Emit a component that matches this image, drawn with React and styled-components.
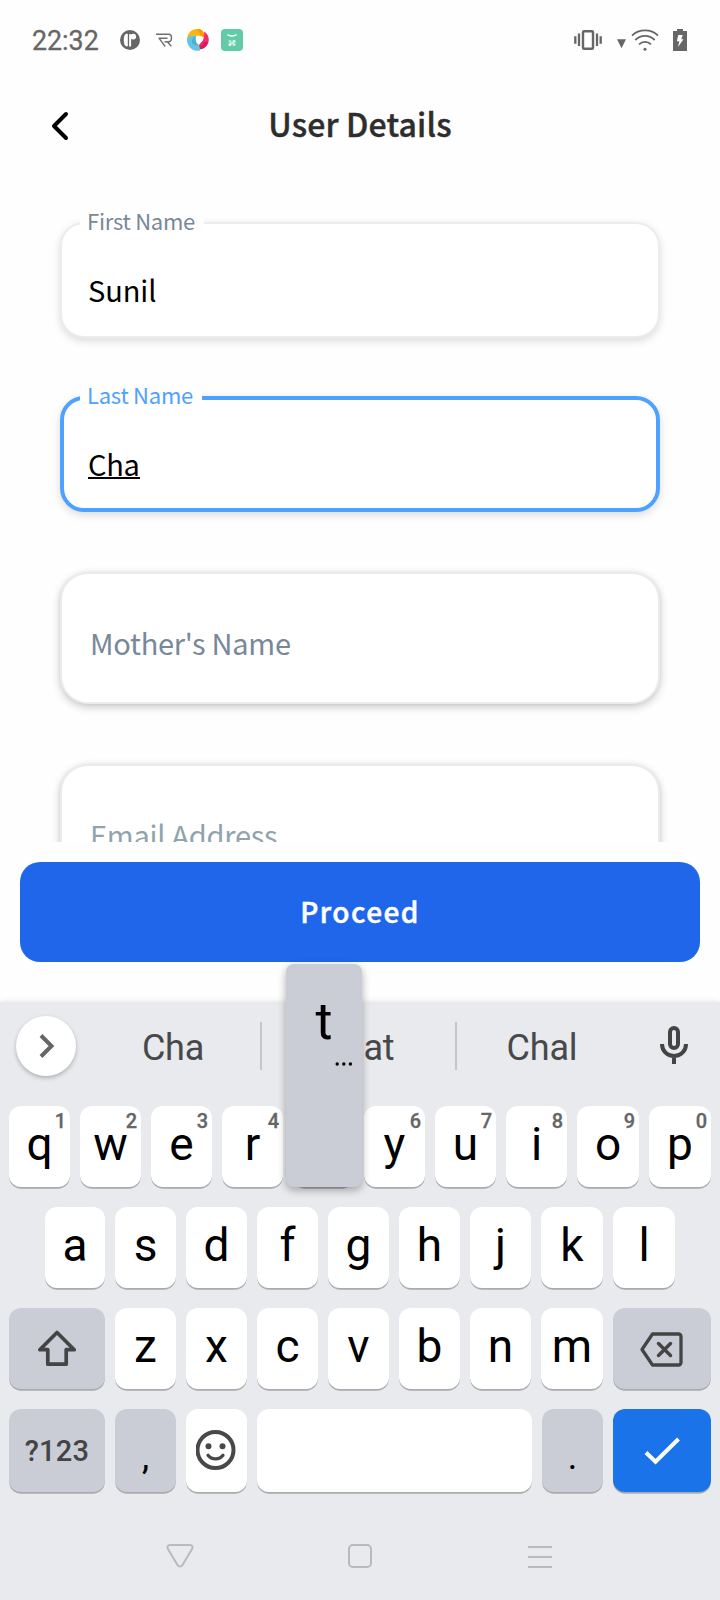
import React from "react";
import styled, { createGlobalStyle, css } from "styled-components";

const GlobalStyle = createGlobalStyle`
  * { box-sizing: border-box; }
  body { margin: 0; background: #fefefe; }
  svg { display: block; flex: none; }
`;

const sourceSans = `"Noto Sans CJK SC", "Open Sans", sans-serif`;
const roboto = `Roboto, sans-serif`;

const Screen = styled.div`
  width: 720px;
  height: 1600px;
  overflow: hidden;
  display: flex;
  flex-direction: column;
  background: #fefefe;
  font-family: ${roboto};
`;

const StatusBar = styled.header`
  height: 80px;
  flex: none;
  display: flex;
  align-items: center;
  justify-content: space-between;
  padding: 0 33px 0 32px;
  color: #666;
`;

const StatusGroup = styled.div`
  display: flex;
  align-items: center;
`;

const Clock = styled.span`
  width: 88px;
  font-size: 26.8px;
  line-height: 30px;
  padding-top: 2px;
  -webkit-text-stroke: 0.3px #666;
`;

const Spacer = styled.span`
  flex: none;
  width: ${(p) => p.$w}px;
`;

const TitleBar = styled.div`
  height: 92px;
  flex: none;
  display: grid;
  grid-template-columns: 52px 1fr 52px;
  align-items: center;
  padding: 0 51px;
  margin-bottom: 2px;
`;

const Title = styled.h1`
  margin: 0;
  padding-bottom: 6px;
  text-align: center;
  font: 500 32px/48px ${sourceSans};
  color: #2d2d2d;
  letter-spacing: 0.15px;
  -webkit-text-stroke: 0.4px #2d2d2d;
`;

const Form = styled.main`
  height: 668px;
  flex: none;
  overflow: hidden;
  padding: 48px 60px 0;
  display: flex;
  flex-direction: column;
`;

const Field = styled.div`
  position: relative;
  flex: none;
  height: ${(p) => (p.$empty ? 132 : 116)}px;
  margin-bottom: ${(p) => p.$gap}px;
  border: ${(p) => (p.$focused ? "4px solid #4da1ff" : "2px solid #e9eded")};
  border-radius: ${(p) => (p.$empty ? 28 : 24)}px;
  background: #fff;
  box-shadow: ${(p) =>
    p.$empty
      ? "0 3px 8px rgba(0,0,0,0.22), 0 0 3px rgba(0,0,0,0.06)"
      : "0 3px 8px rgba(0,0,0,0.14)"};
  padding: ${(p) => (p.$focused ? "41px 0 0 24px" : p.$empty ? "46px 0 0 28px" : "43px 0 0 26px")};
`;

const FieldLabel = styled.label`
  position: absolute;
  top: ${(p) => (p.$focused ? -19 : -17)}px;
  left: ${(p) => (p.$focused ? 16 : 18)}px;
  padding: 0 9px 0 7px;
  background: #fefefe;
  font: 400 22px/26px ${sourceSans};
  letter-spacing: -0.25px;
  color: ${(p) => (p.$focused ? "#4da1ff" : "#778899")};
`;

const FieldValue = styled.span`
  display: inline-block;
  font: 400 29px/44px ${sourceSans};
  letter-spacing: -0.1px;
  color: #000;
  ${(p) =>
    p.$composing &&
    css`
      letter-spacing: -0.3px;
      line-height: 30px;
      margin-top: 7px;
      height: 31px;
      border-bottom: 2px solid #000;
    `}
`;

const Placeholder = styled.span`
  display: block;
  font: 400 29px/44px ${sourceSans};
  letter-spacing: -0.26px;
  color: ${(p) => p.$tone};
`;

const Footer = styled.div`
  flex: none;
  height: 160px;
  padding: 20px 20px 40px;
`;

const ProceedButton = styled.button`
  display: block;
  width: 100%;
  height: 100px;
  padding: 0;
  border: 0;
  border-radius: 20px;
  background: #1f66eb;
  color: #fff;
  font: 500 28px/98px ${sourceSans};
  padding-bottom: 2px;
  letter-spacing: 1.45px;
  -webkit-text-stroke: 0.5px #fff;
`;

const Keyboard = styled.section`
  flex: 1;
  background: #e8eaed;
  box-shadow: 0 0 6px rgba(0, 0, 0, 0.12);
  display: flex;
  flex-direction: column;
`;

const Suggestions = styled.div`
  height: 104px;
  flex: none;
  padding: 14px 16px 0;
  display: flex;
  align-items: flex-start;
`;

const ExpandButton = styled.button`
  width: 60px;
  height: 60px;
  padding: 0;
  border: 0;
  border-radius: 50%;
  background: #fff;
  box-shadow: 0 2px 4px rgba(0, 0, 0, 0.25);
  display: grid;
  place-items: center;
`;

const Suggestion = styled.span`
  width: ${(p) => p.$w}px;
  text-align: center;
  font: 400 36px/48px ${roboto};
  letter-spacing: -0.2px;
  padding: 8px ${(p) => p.$trim || 0}px 0 0;
  color: #47484a;
`;

const Divider = styled.span`
  width: 2px;
  height: 48px;
  margin-top: 6px;
  background: #c4c6c9;
`;

const KeyRow = styled.div`
  flex: none;
  display: flex;
  gap: 10px;
  padding-left: ${(p) => p.$indent || 9}px;
  margin-bottom: 20px;
`;

const Key = styled.div`
  position: relative;
  flex: none;
  width: ${(p) => p.$w || 61}px;
  height: ${(p) => (p.$tall ? 83 : 81)}px;
  border-radius: 12px;
  background: ${(p) => (p.$kind === "enter" ? "#1a73e8" : p.$kind === "grey" ? "#cacdd6" : "#fff")};
  box-shadow: 0 2px 0 -0.2px #a9abae;
  color: #000;
  font: 400 46px/77px ${roboto};
  text-align: center;
`;

const KeyHint = styled.span`
  position: absolute;
  top: 3px;
  right: 4px;
  font: 500 20px/24px ${roboto};
  color: #666;
  -webkit-text-stroke: 0.3px #666;
`;

const IconKey = styled(Key)`
  display: grid;
  place-items: center;
`;

const SymbolKey = styled(Key)`
  font: 500 29px/84px ${roboto};
  letter-spacing: 0.2px;
  color: #444;
`;

const PunctuationKey = styled(Key)`
  font-size: 36px;
  line-height: 96px;
`;

const KeyPopup = styled.div`
  position: absolute;
  z-index: 2;
  left: -7px;
  bottom: 0;
  width: 76px;
  height: 223px;
  border-radius: 8px;
  background: #cacdd6;
  box-shadow: 0 3px 8px rgba(0, 0, 0, 0.32);
  font: 400 52px/60px ${roboto};
  padding-top: 28px;
`;

const MoreDots = styled.svg`
  margin: 10px 0 0 49px;
`;

const NavBar = styled.nav`
  flex: 1;
  display: grid;
  grid-template-columns: repeat(3, 180px);
  justify-content: center;
  justify-items: center;
  align-items: start;
  padding-top: 28px;
`;

const topRow = [
  ["q", "1"], ["w", "2"], ["e", "3"], ["r", "4"], ["t", "5"],
  ["y", "6"], ["u", "7"], ["i", "8"], ["o", "9", 62], ["p", "0", 62],
];

function NotificationIcons() {
  return (
    <>
      <svg width="20" height="20" viewBox="0 0 20 20">
        <circle cx="10" cy="10" r="10" fill="#666" />
        <path d="M7.800 3.800C4.800 3 3.800 6 3.800 10s1 7 4 6.200Z" fill="#fff" />
        <path d="M9.100 4.200h2v12.300h-2Z" fill="#fff" />
        <circle cx="13.200" cy="6.600" r="2.900" fill="#fff" />
      </svg>
      <Spacer $w={16} />
      <svg width="17" height="15" viewBox="0 0 17 15" fill="none" stroke="#707070" strokeWidth="1.400">
        <path d="M0 1.200h12.500c4 0 4 7.500 0 7.500H8.500M2.500 5.200h9M3 5.200l6.200 8.300M11.300 8.700l4 4.500" />
      </svg>
      <Spacer $w={14} />
      <svg width="22" height="22" viewBox="0 0 22 22">
        <path d="M0 9.500C1 2 7-1 13 .3c3 .9 4 3.500 4.200 8.200L14 7H8.500C5.500 6.500 2.500 7 0 9.500Z" fill="#ffb511" />
        <path d="M9 0c5-.8 9 2.500 8.200 8.500L13.500 6.500C13 4 11.500 2 9 0Z" fill="#ff9800" />
        <path d="M17 2.500C22 5.500 23.500 12 19.500 17c-2.500 3-6.500 4-10.500 2.500L16 11c1-2.500 1.500-5.500 1-8.500Z" fill="#ef2f6b" />
        <path d="M9 19.500c3-.5 5.500-2.500 8-6.500 1.500 0 3 0 4 0-1.500 6-6.500 8.500-12 6.500Z" fill="#d81b60" />
        <path d="M0 9.500C2 6.500 5.500 6 9 7c-.8 4 0 6.500 2.500 8.500 1 2 1.500 3.500 1.500 6C5.500 23.500-.5 17 0 9.500Z" fill="#62c6e2" />
        <path d="M9 7c-.8 4 0 6.500 2.500 8.500C9 17 6.500 16 5 13.500 4.500 10.500 6 8 9 7Z" fill="#4bb0cf" />
        <path d="M9 7.200c2-.7 4-.4 5 .8l2 3-4.500 4.500C9 14 8.200 11 9 7.200Z" fill="#fff" />
      </svg>
      <Spacer $w={12} />
      <svg width="22" height="22" viewBox="0 0 22 22">
        <rect width="22" height="22" rx="4" fill="#62cba8" />
        <path d="M6.500 5.500c2 2 7 2 9 0" fill="none" stroke="#fff" strokeWidth="1.300" />
        <g fill="#eafaf4">
          <circle cx="9" cy="12.300" r="1.500" opacity=".6" /><circle cx="13" cy="12.300" r="1.500" />
          <circle cx="9" cy="15.500" r="1.500" /><circle cx="13" cy="15.500" r="1.500" opacity=".8" />
          <circle cx="11" cy="14" r="1" />
        </g>
      </svg>
    </>
  );
}

function SystemIcons() {
  return (
    <>
      <svg width="28" height="20" viewBox="0 0 28 20">
        <rect x="9" y="1.200" width="10" height="17.600" rx="1" fill="none" stroke="#666" strokeWidth="2.400" />
        <path d="M1.300 6.300v7.500M5 3.500v12.500M23 3.500v12.500M26.700 6.300v7.500" stroke="#666" strokeWidth="2.300" />
      </svg>
      <Spacer $w={15} />
      <svg width="9" height="22" viewBox="0 0 9 22">
        <path d="M0 10.300h9L4.500 19.300Z" fill="#666" />
      </svg>
      <Spacer $w={5} />
      <svg width="28" height="22" viewBox="0 0 28 22" fill="none" stroke="#666" strokeWidth="1.800">
        <path d="M1 6.600C8-.3 20-.3 27 6.600M4.300 11c5.500-5.500 13.900-5.500 19.400 0M8 15.300c3.500-3.300 8.500-3.300 12 0" />
        <circle cx="14" cy="20.300" r="1.500" fill="#666" stroke="none" />
      </svg>
      <Spacer $w={14} />
      <svg width="14" height="22" viewBox="0 0 14 22">
        <path d="M4 0h6v2h4v20H0V2h4Z" fill="#666" />
        <path d="M5.300 6h4.400L8.300 10.200H10.500L5 18l1.300-5.700H3.800Z" fill="#fff" />
      </svg>
    </>
  );
}

function LetterKey({ letter, hint, width }) {
  const pressed = letter === "t";
  return (
    <Key $w={width} $kind={pressed ? "grey" : undefined}>
      {pressed ? (
        <KeyPopup>
          {letter}
          <MoreDots width="18" height="4" viewBox="0 0 18 4">
            <circle cx="2.200" cy="2" r="1.700" /><circle cx="8.800" cy="2" r="1.700" /><circle cx="15.400" cy="2" r="1.700" />
          </MoreDots>
        </KeyPopup>
      ) : (
        <>
          {letter}
          {hint && <KeyHint>{hint}</KeyHint>}
        </>
      )}
    </Key>
  );
}

export default function App() {
  return (
    <Screen>
      <GlobalStyle />
      <StatusBar>
        <StatusGroup>
          <Clock>22:32</Clock>
          <NotificationIcons />
        </StatusGroup>
        <StatusGroup>
          <SystemIcons />
        </StatusGroup>
      </StatusBar>

      <TitleBar>
        <svg width="18" height="30" viewBox="0 0 18 30">
          <path d="M15 3 3 15l12 12" fill="none" stroke="#000" strokeWidth="4" strokeLinecap="round" strokeLinejoin="round" />
        </svg>
        <Title>User Details</Title>
      </TitleBar>

      <Form>
        <Field $gap={58}>
          <FieldLabel>First Name</FieldLabel>
          <FieldValue>Sunil</FieldValue>
        </Field>
        <Field $focused $gap={60}>
          <FieldLabel $focused>Last Name</FieldLabel>
          <FieldValue $composing>Cha</FieldValue>
        </Field>
        <Field $empty $gap={60}>
          <Placeholder $tone="#778899">Mother's Name</Placeholder>
        </Field>
        <Field $empty $gap={0}>
          <Placeholder $tone="#90a4ae">Email Address</Placeholder>
        </Field>
      </Form>

      <Footer>
        <ProceedButton>Proceed</ProceedButton>
      </Footer>

      <Keyboard>
        <Suggestions>
          <ExpandButton>
            <svg width="60" height="60" viewBox="0 0 60 60">
              <path d="M25 19.500 35.500 30 25 40.500" fill="none" stroke="#666" strokeWidth="4" />
            </svg>
          </ExpandButton>
          <Spacer $w={10} />
          <Suggestion $w={174}>Cha</Suggestion>
          <Divider />
          <Suggestion $w={193} $trim={2}>Chat</Suggestion>
          <Divider />
          <Suggestion $w={170}>Chal</Suggestion>
          <Spacer $w={33} />
          <svg width="28" height="60" viewBox="0 0 28 60" fill="none" stroke="#444" strokeWidth="4">
            <rect x="10" y="12" width="8" height="20" rx="4" />
            <path d="M2 28c0 7 5.300 12 12 12s12-5 12-12M14 40v8" />
          </svg>
        </Suggestions>

        <KeyRow>
          {topRow.map(([letter, hint, width]) => (
            <LetterKey key={letter} letter={letter} hint={hint} width={width} />
          ))}
        </KeyRow>
        <KeyRow $indent={45}>
          {[..."asdfghjkl"].map((letter) => (
            <LetterKey key={letter} letter={letter} width={letter === "a" ? 60 : "kl".includes(letter) ? 62 : 61} />
          ))}
        </KeyRow>
        <KeyRow>
          <IconKey $w={96} $kind="grey">
            <svg width="40" height="42" viewBox="0 0 40 42" fill="none" stroke="#444" strokeWidth="3.700" strokeLinejoin="round">
              <path d="M20 4.500 2.800 21.700h8v14.500h18.400V21.700h8Z" />
            </svg>
          </IconKey>
          {[..."zxcvbnm"].map((letter) => (
            <LetterKey key={letter} letter={letter} width={letter === "m" ? 62 : 61} />
          ))}
          <IconKey $w={98} $kind="grey">
            <svg width="44" height="36" viewBox="0 0 44 36" fill="none" stroke="#444" strokeLinejoin="round" strokeLinecap="round">
              <path d="M2 18.500 12.500 3H38.500a2.500 2.500 0 0 1 2.500 2.500v26a2.500 2.500 0 0 1-2.500 2.500H12.500Z" strokeWidth="3.300" />
              <path d="m18.500 12.500 12 12m0-12-12 12" strokeWidth="3.500" />
            </svg>
          </IconKey>
        </KeyRow>
        <KeyRow>
          <SymbolKey $w={96} $kind="grey" $tall>?123</SymbolKey>
          <PunctuationKey $kind="grey" $tall>,</PunctuationKey>
          <IconKey $tall>
            <svg width="42" height="42" viewBox="0.500 0 42 42" fill="none" stroke="#484848">
              <circle cx="20" cy="20" r="18" strokeWidth="4" />
              <circle cx="13" cy="16.300" r="3" fill="#484848" stroke="none" />
              <circle cx="27" cy="16.300" r="3" fill="#484848" stroke="none" />
              <path d="M12.500 25.300c3.500 4.700 11.500 4.700 15 0" strokeWidth="3.300" strokeLinecap="round" />
            </svg>
          </IconKey>
          <Key $w={275} $tall />
          <PunctuationKey $kind="grey" $tall>.</PunctuationKey>
          <IconKey $w={98} $kind="enter" $tall>
            <svg width="36" height="30" viewBox="0 0 36 30">
              <path d="M2 16.500l9.500 9.200L34.500 3" fill="none" stroke="#fff" strokeWidth="4" />
            </svg>
          </IconKey>
        </KeyRow>

        <NavBar>
          <svg width="28" height="32" viewBox="0 -1 28 32" fill="none" stroke="#b8babd" strokeWidth="2">
            <path d="M4 4h20c2.300 0 3.200 2 2 4L16.500 24c-1.200 2-3.800 2-5 0L2 8C.8 6 1.700 4 4 4Z" />
          </svg>
          <svg width="24" height="32" viewBox="0 0 24 32" fill="none" stroke="#b8babd" strokeWidth="2">
            <rect x="1" y="5" width="22" height="22" rx="4" />
          </svg>
          <svg width="24" height="32" viewBox="0 0 24 32" stroke="#b8babd" strokeWidth="2">
            <path d="M0 7h24M0 17h24M0 27h24" />
          </svg>
        </NavBar>
      </Keyboard>
    </Screen>
  );
}
